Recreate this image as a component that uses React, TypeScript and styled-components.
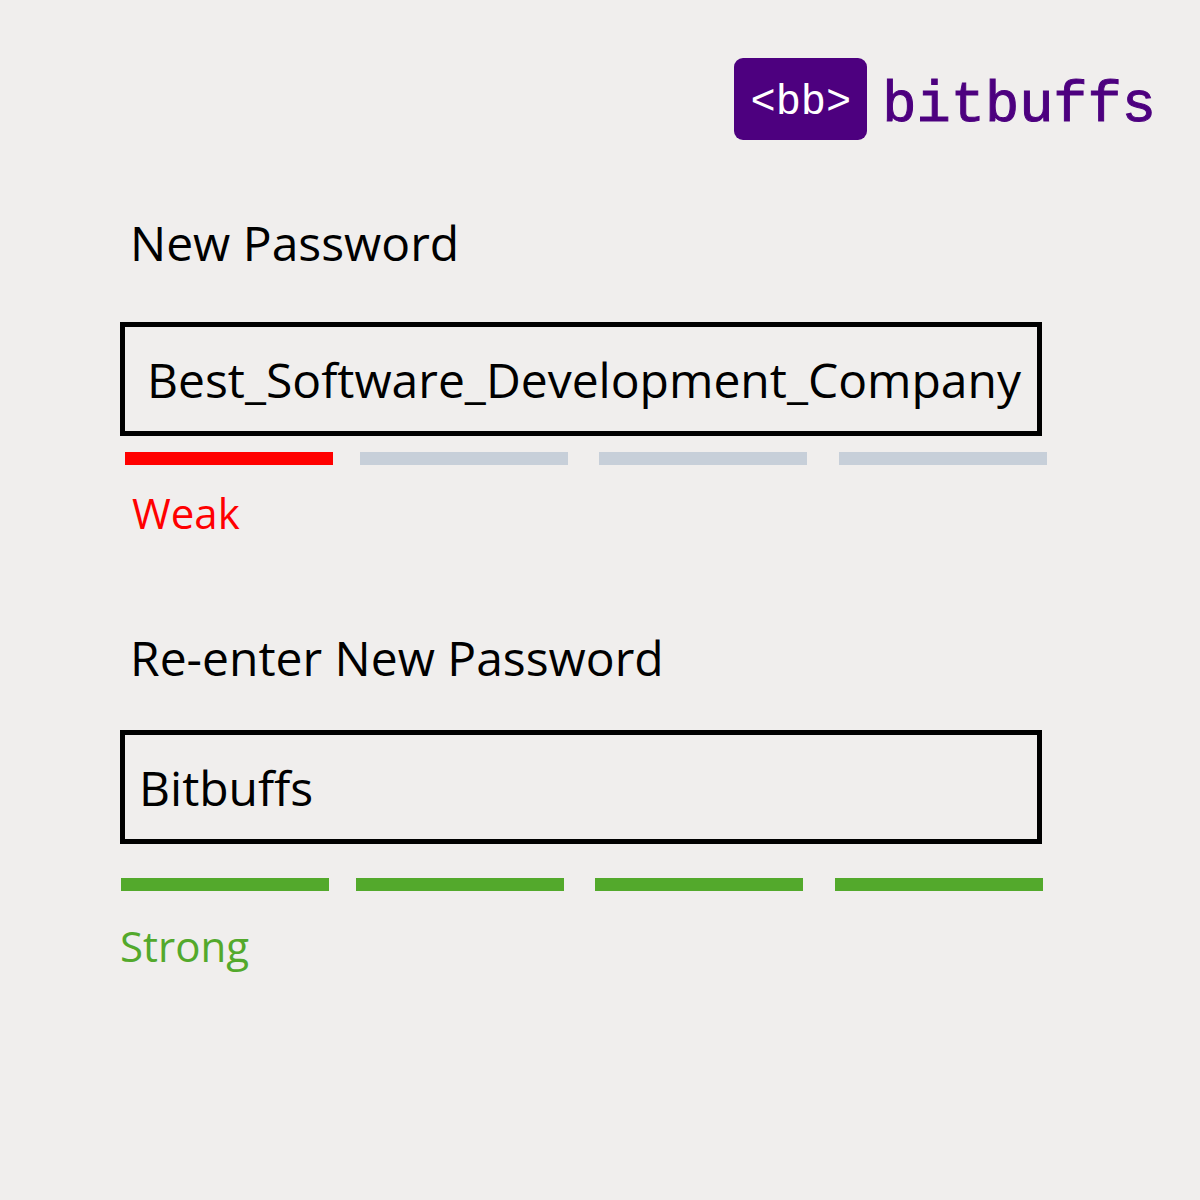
import React, { useId, useState } from "react";
import styled, { createGlobalStyle } from "styled-components";

const GlobalStyle = createGlobalStyle`
  *, *::before, *::after { box-sizing: border-box; }
  body {
    margin: 0;
    background: #f0eeed;
    color: #000;
    font-family: "Open Sans", "Noto Sans", sans-serif;
  }
`;

const Page = styled.div`
  min-height: 100vh;
  padding-top: 58px;
`;

const Header = styled.header`
  display: flex;
  justify-content: flex-end;
  padding-right: 44px;
`;

const Brand = styled.a`
  display: flex;
  align-items: center;
  gap: 15px;
  color: #4d007f;
  font-family: "Courier New", "Liberation Mono", monospace;
  text-decoration: none;
`;

const BrandBadge = styled.span`
  display: flex;
  align-items: center;
  justify-content: center;
  width: 133px;
  height: 82px;
  padding-top: 8px;
  border-radius: 9px;
  background: #4d007f;
  color: #fff;
  font-size: 42px;
  line-height: 48px;
`;

const BrandName = styled.span`
  padding-top: 14px;
  font-size: 57px;
  line-height: 64px;
  -webkit-text-stroke: 1px currentColor;
`;

const Form = styled.form`
  display: flex;
  flex-direction: column;
  gap: 85px;
  padding: 71px 158px 48px 120px;
`;

const Field = styled.div`
  display: flex;
  flex-direction: column;
`;

const Label = styled.label<{ $gap: number }>`
  padding-left: 10px;
  margin-bottom: ${(p) => p.$gap}px;
  font-size: 48px;
  line-height: 64px;
`;

const TextBox = styled.input<{ $inset: number }>`
  width: 100%;
  height: 114px;
  padding: 0 8px 0 ${(p) => p.$inset}px;
  border: 5px solid #000;
  border-radius: 0;
  background: transparent;
  color: inherit;
  font: inherit;
  font-size: 48px;
  outline: none;
`;

const Meter = styled.div<{ $gap: number; $shift: number }>`
  display: grid;
  grid-template-columns: 235fr 239fr 240fr 208fr;
  margin: ${(p) => `${p.$gap}px ${-p.$shift}px 0 ${p.$shift}px`};
`;

const Segment = styled.span<{ $color: string }>`
  max-width: 208px;
  height: 13px;
  background: ${(p) => p.$color};
`;

const Status = styled.output<{ $color: string; $gap: number; $inset: number }>`
  margin-top: ${(p) => p.$gap}px;
  padding-left: ${(p) => p.$inset}px;
  color: ${(p) => p.$color};
  font-size: 42px;
  line-height: 56px;
`;

const EMPTY = "#c7cfd9";

type PasswordFieldProps = {
  label: string;
  initial: string;
  status: string;
  color: string;
  filled: number;
  labelGap: number;
  textInset: number;
  meterGap: number;
  meterShift: number;
  statusGap: number;
  statusInset: number;
};

function PasswordField(props: PasswordFieldProps) {
  const id = useId();
  const [value, setValue] = useState(props.initial);
  return (
    <Field>
      <Label htmlFor={id} $gap={props.labelGap}>
        {props.label}
      </Label>
      <TextBox
        id={id}
        type="text"
        spellCheck={false}
        autoComplete="off"
        value={value}
        onChange={(e) => setValue(e.target.value)}
        $inset={props.textInset}
      />
      <Meter aria-hidden="true" $gap={props.meterGap} $shift={props.meterShift}>
        {[0, 1, 2, 3].map((i) => (
          <Segment key={i} $color={i < props.filled ? props.color : EMPTY} />
        ))}
      </Meter>
      <Status htmlFor={id} $color={props.color} $gap={props.statusGap} $inset={props.statusInset}>
        {props.status}
      </Status>
    </Field>
  );
}

export default function App() {
  return (
    <Page>
      <GlobalStyle />
      <Header>
        <Brand href="#">
          <BrandBadge>&lt;bb&gt;</BrandBadge>
          <BrandName>bitbuffs</BrandName>
        </Brand>
      </Header>
      <Form onSubmit={(e) => e.preventDefault()}>
        <PasswordField
          label="New Password"
          initial="Best_Software_Development_Company"
          status="Weak"
          color="#ff0000"
          filled={1}
          labelGap={47}
          textInset={22}
          meterGap={16}
          meterShift={5}
          statusGap={20}
          statusInset={12}
        />
        <PasswordField
          label="Re-enter New Password"
          initial="Bitbuffs"
          status="Strong"
          color="#53a92c"
          filled={4}
          labelGap={40}
          textInset={14}
          meterGap={34}
          meterShift={1}
          statusGap={27}
          statusInset={0}
        />
      </Form>
    </Page>
  );
}
